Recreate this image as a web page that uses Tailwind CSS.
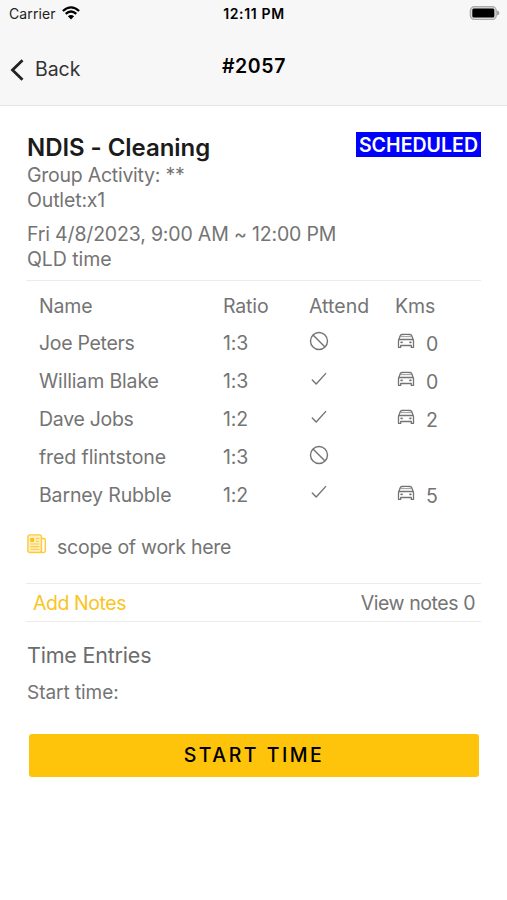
<!DOCTYPE html>
<html lang="en">
<head>
<meta charset="utf-8">
<meta name="viewport" content="width=device-width, initial-scale=1">
<title>#2057</title>
<script src="https://cdn.jsdelivr.net/npm/@tailwindcss/browser@4"></script>
</head>
<body class="bg-white font-[Inter,sans-serif] text-[19.500px] tracking-[-0.15px] text-[#747474] overflow-hidden">
<svg class="hidden">
  <symbol id="ban" viewBox="0 0 20 20"><g fill="none" stroke="currentColor" stroke-width="1.4"><circle cx="10" cy="10" r="8.500"/><path d="M4 4 16 16"/></g></symbol>
  <symbol id="check" viewBox="0 0 20 20"><path d="M3.300 11 7.200 15 16.600 4.600" fill="none" stroke="currentColor" stroke-width="1.400" stroke-linecap="round" stroke-linejoin="round"/></symbol>
  <symbol id="car" viewBox="0 0 18 16"><g fill="none" stroke="currentColor" stroke-width="1.300" stroke-linejoin="round" stroke-linecap="round"><path d="M1.500 7.500 3.200 2.700Q3.700 1.600 4.900 1.500Q9 1.200 13.100 1.500Q14.300 1.600 14.800 2.700L16.500 7.500V14.400H14.300V12.500H3.700V14.400H1.500Z"/><path d="M2.200 6.500H15.800"/><path d="M3.800 3.600H14.200" stroke-width=".7"/></g><rect x="3.300" y="8.600" width="2.600" height="1.700" rx=".8" fill="currentColor"/><rect x="12.100" y="8.600" width="2.600" height="1.700" rx=".8" fill="currentColor"/></symbol>
</svg>
<header class="h-[106px] bg-[#f7f7f7] border-b border-[#e6e6e6] text-black">
  <div class="h-[28px] grid grid-cols-3 items-center pl-[9px] pr-[7px] text-[14px] leading-[28px]">
    <div class="flex items-center gap-[6px] text-[#222]">
      <span class="tracking-[0.1px]">Carrier</span>
      <svg class="w-[18px] h-[14px] -mt-[2px]" viewBox="0 0 18 14"><g fill="none" stroke="#000" stroke-width="2.300"><path d="M.9 5Q9-2.300 17.100 5"/><path d="M3.700 7.900Q9 3 14.300 7.900"/></g><path d="M9 13.500 5.900 10.300Q9 7.700 12.100 10.300Z" fill="#000"/></svg>
    </div>
    <div class="text-center font-semibold whitespace-nowrap tracking-[0.650px]"><span class="-ml-[1px]">12:11 PM</span></div>
    <svg class="justify-self-end w-[31px] h-[14px] -mt-[2px]" viewBox="0 0 31 14"><rect x="1.300" y=".7" width="26" height="12.800" rx="4" fill="#d8d8d8" stroke="#aaa" stroke-width="1.200"/><rect x="3.300" y="2.600" width="22" height="9" rx="1.500" fill="#000"/><path d="M28.200 4.600Q30.400 5.300 30.400 7T28.200 9.500Z" fill="#999"/></svg>
  </div>
  <div class="h-[77px] grid grid-cols-3 pl-[10px] pr-[9px]">
    <div class="flex items-center gap-[10px] h-[84px] text-[#333]">
      <svg class="w-[15px] h-[24px]" viewBox="0 0 15 24"><path d="M12.500 2.200 2.500 12 12.500 21.800" fill="none" stroke="#222" stroke-width="2.800"/></svg>
      <span class="tracking-[-0.05px]">Back</span>
    </div>
    <div class="text-center font-semibold leading-[77px] tracking-[0.600px]">#2057</div>
  </div>
</header>
<main class="px-[26px] pt-[26px]">
  <section class="pl-px">
    <div class="flex justify-between items-start h-[31px]">
      <h1 class="text-[24px] leading-[32px] font-semibold text-[#1b1b1b] tracking-[-0.050px] whitespace-nowrap">NDIS - Cleaning</h1>
      <span class="h-[25px] w-[125px] text-center bg-[#0000fe] text-white font-semibold leading-[26px] tracking-[0.050px]">SCHEDULED</span>
    </div>
    <p class="leading-[25px] tracking-[-0.250px]">Group Activity: **</p>
    <p class="leading-[25px]">Outlet:x1</p>
    <p class="mt-[9px] leading-[25px] tracking-[-0.170px]">Fri 4/8/2023, 9:00 AM ~ 12:00 PM</p>
    <p class="leading-[25px] tracking-[-0.050px]">QLD time</p>
  </section>
  <section class="mt-[8px] border-t border-[#ececec] pt-[7px] pl-[13px]">
    <div class="grid grid-cols-[184px_86px_86px_1fr] h-[37px] items-center"><span>Name</span><span>Ratio</span><span class="tracking-[0.050px]">Attend</span><span>Kms</span></div>
    <div class="grid grid-cols-[184px_86px_86px_1fr] h-[38px] items-center"><span class="tracking-[-0.300px]">Joe Peters</span><span>1:3</span><svg class="size-5 -mt-[7px]"><use href="#ban"/></svg><span class="flex items-center gap-[11px]"><svg class="ml-[2px] w-[18px] h-[16px] -mt-[6px]"><use href="#car"/></svg><span class="pt-[2px]">0</span></span></div>
    <div class="grid grid-cols-[184px_86px_86px_1fr] h-[38px] items-center"><span>William Blake</span><span>1:3</span><svg class="size-5 -mt-[7px]"><use href="#check"/></svg><span class="flex items-center gap-[11px]"><svg class="ml-[2px] w-[18px] h-[16px] -mt-[6px]"><use href="#car"/></svg><span class="pt-[2px]">0</span></span></div>
    <div class="grid grid-cols-[184px_86px_86px_1fr] h-[38px] items-center"><span class="tracking-[-0.300px]">Dave Jobs</span><span>1:2</span><svg class="size-5 -mt-[7px]"><use href="#check"/></svg><span class="flex items-center gap-[11px]"><svg class="ml-[2px] w-[18px] h-[16px] -mt-[6px]"><use href="#car"/></svg><span class="pt-[2px]">2</span></span></div>
    <div class="grid grid-cols-[184px_86px_86px_1fr] h-[38px] items-center"><span class="tracking-[-0.100px]">fred flintstone</span><span>1:3</span><svg class="size-5 -mt-[7px]"><use href="#ban"/></svg></div>
    <div class="grid grid-cols-[184px_86px_86px_1fr] h-[37px] items-center"><span>Barney Rubble</span><span>1:2</span><svg class="size-5 -mt-[7px]"><use href="#check"/></svg><span class="flex items-center gap-[11px]"><svg class="ml-[2px] w-[18px] h-[16px] -mt-[6px]"><use href="#car"/></svg><span class="pt-[2px]">5</span></span></div>
  </section>
  <section class="mt-[18px] h-[51px] flex items-start gap-[10px] pl-px">
    <svg class="w-[20px] h-[20px] mt-[2px]" viewBox="0 0 20 20"><g fill="none" stroke="#fcca3c" stroke-width="1.400"><rect x=".9" y=".9" width="13.600" height="17.600" rx="2" fill="#ffefc0"/><path d="M14.500 4.500H16.500Q18.300 4.500 18.300 6.300V16.200Q18.300 18.500 16.300 18.500H13.500Q14.500 18 14.500 16.500"/><path d="M8.800 4.500H12.300M8.800 7.200H12.300M3.300 10H12.300M3.300 12.600H12.300M3.300 15.200H12.300" stroke-width="1.100"/></g><rect x="3.200" y="3.900" width="4" height="4" rx="1" fill="#fbbf16"/></svg>
    <span class="leading-[30px] tracking-[-0.250px]">scope of work here</span>
  </section>
  <section class="h-[39px] border-y border-[#ebebeb] flex justify-between items-center pl-[7px] pr-[6px] leading-[30px]">
    <a class="text-[#fbc423] tracking-[-0.450px]">Add Notes</a><span class="tracking-[-0.430px]">View notes 0</span>
  </section>
  <section class="pl-px">
    <h2 class="mt-[19px] text-[21.500px] leading-[28px] text-[#6c6c6c] tracking-[-0.200px]">Time Entries</h2>
    <p class="mt-[12px] leading-[24px] text-[19px] tracking-[-0.050px]">Start time:</p>
    <button class="mt-[29px] ml-[2px] block w-[450px] h-[43px] rounded-[3px] bg-[#fec30b] text-black font-medium text-[19.500px] tracking-[2.500px]">START TIME</button>
  </section>
</main>
</body>
</html>
